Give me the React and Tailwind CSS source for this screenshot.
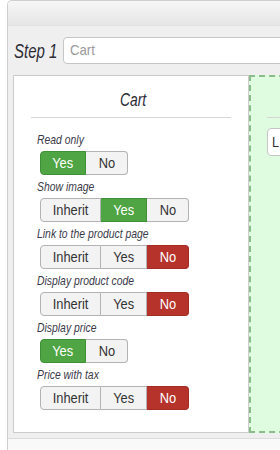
import React from "react";

const F = { fontFamily: '"Liberation Sans", Arial, sans-serif' };

function Group({ items, active, tone }) {
  return (
    <div className="flex ml-[9px] h-[24px]">
      {items.map((it, i) => {
        const isActive = it === active;
        const first = i === 0;
        const last = i === items.length - 1;
        const w = it === "Inherit" ? "w-[61px]" : it === "Yes" ? "w-[46px]" : "w-[42px]";
        const base = "flex items-center justify-center text-[15.5px] leading-none border-y";
        const round = `${first ? "rounded-l-[4px] border-l" : ""} ${last ? "rounded-r-[4px] border-r" : "border-r"}`;
        const col = isActive
          ? tone === "green"
            ? "bg-[#4fa444] border-[#3f8f36] text-white"
            : "bg-[#b5332b] border-[#a52c25] text-white"
          : "bg-[#f3f3f3] border-[#b3b3b3] text-[#333]";
        return (
          <div key={it} className={`${base} ${round} ${col} ${w}`}>
            <span className="inline-block scale-x-[0.83] whitespace-nowrap">{it}</span>
          </div>
        );
      })}
    </div>
  );
}

function Label({ children, first }) {
  return (
    <div className={`pl-[6px] h-[23px] leading-[23px] italic text-[13px] text-[#3a3a48] ${first ? "mt-[10px]" : ""}`}>
      <span className="inline-block origin-left scale-x-[0.8] whitespace-nowrap">{children}</span>
    </div>
  );
}

export default function App() {
  return (
    <div className="w-[280px] h-[450px] overflow-hidden bg-white" style={F}>
      <div className="ml-[7px] w-[600px] h-[450px] border-l border-t border-[#cfcfcf] rounded-tl-[5px] flex flex-col overflow-hidden">
        <div className="h-[25px] shrink-0 bg-gradient-to-b from-[#f6f6f6] to-[#e6e6e6] border-b border-[#e2e2e2]" />
        <div className="bg-[#efefef] pl-[5px] pt-[11px] pb-[5px] flex flex-col">
          <div className="flex items-center h-[27px]">
            <div className="ml-[1px] w-[49px] italic text-[20px] text-[#2b2b35] leading-none whitespace-nowrap">
              <span className="inline-block origin-left scale-x-[0.75]">Step 1</span>
            </div>
            <div className="h-[27px] flex-1 bg-white border border-[#c6c6c6] rounded-[4px] flex items-center pl-[6px] text-[15px] text-[#999]">
              <span className="inline-block origin-left scale-x-[0.88]">Cart</span>
            </div>
          </div>
          <div className="flex mt-[11px] h-[358px]">
            <div className="w-[236px] shrink-0 bg-white border border-[#cccccc] px-[17px] pt-[13px]">
              <div className="text-center italic text-[18px] leading-[22px] text-[#2b2b35] pl-[4px]">
                <span className="inline-block scale-x-[0.77]">Cart</span>
              </div>
              <div className="mt-[6px] border-t border-[#d6d6d6]" />
              <Label first>Read only</Label>
              <Group items={["Yes", "No"]} active="Yes" tone="green" />
              <Label>Show image</Label>
              <Group items={["Inherit", "Yes", "No"]} active="Yes" tone="green" />
              <Label>Link to the product page</Label>
              <Group items={["Inherit", "Yes", "No"]} active="No" tone="red" />
              <Label>Display product code</Label>
              <Group items={["Inherit", "Yes", "No"]} active="No" tone="red" />
              <Label>Display price</Label>
              <Group items={["Yes", "No"]} active="Yes" tone="green" />
              <Label>Price with tax</Label>
              <Group items={["Inherit", "Yes", "No"]} active="No" tone="red" />
            </div>
            <div className="flex-1 bg-[#e0fce0] border-2 border-dashed border-[#8cbc8c] pl-[16px] pt-[40px]">
              <div className="border-t border-[#d6d6d6]" />
              <div className="mt-[10px] h-[28px] bg-white border border-[#c6c6c6] rounded-[4px] flex items-center pl-[4px] text-[15px] text-[#333]">
                <span className="inline-block origin-left scale-x-[0.85]">L</span>
              </div>
            </div>
          </div>
        </div>
        <div className="flex-1 bg-[#f9f9f9] border-t border-[#dcdcdc]" />
      </div>
    </div>
  );
}
